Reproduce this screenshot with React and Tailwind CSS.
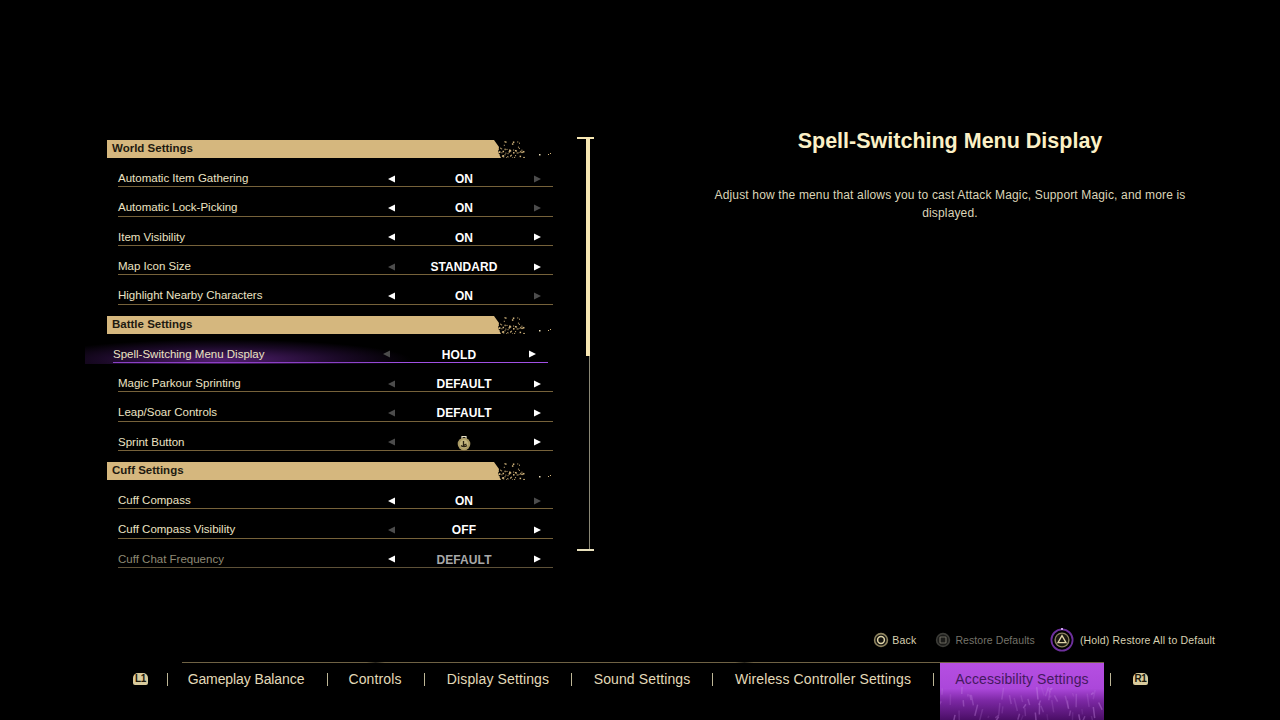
import React from "react";

const FONT = "font-['Liberation_Sans',Arial,sans-serif]";

const sections = [
  {
    title: "World Settings",
    rows: [
      { label: "Automatic Item Gathering", value: "ON", left: true, right: false },
      { label: "Automatic Lock-Picking", value: "ON", left: true, right: false },
      { label: "Item Visibility", value: "ON", left: true, right: true },
      { label: "Map Icon Size", value: "STANDARD", left: false, right: true },
      { label: "Highlight Nearby Characters", value: "ON", left: true, right: false },
    ],
  },
  {
    title: "Battle Settings",
    rows: [
      { label: "Spell-Switching Menu Display", value: "HOLD", left: false, right: true, selected: true },
      { label: "Magic Parkour Sprinting", value: "DEFAULT", left: false, right: true },
      { label: "Leap/Soar Controls", value: "DEFAULT", left: false, right: true },
      { label: "Sprint Button", icon: true, left: false, right: true },
    ],
  },
  {
    title: "Cuff Settings",
    rows: [
      { label: "Cuff Compass", value: "ON", left: true, right: false },
      { label: "Cuff Compass Visibility", value: "OFF", left: false, right: true },
      { label: "Cuff Chat Frequency", value: "DEFAULT", left: true, right: true, faded: true },
    ],
  },
];

// small seeded generator so the paint flecks stay the same on every render
const seeded = (seed) => {
  let s = seed;
  return () => {
    s = (s * 16807) % 2147483647;
    return s / 2147483647;
  };
};

const flecks = (() => {
  const rnd = seeded(4242);
  const out = [];
  for (let i = 0; i < 170; i++) {
    const x = rnd() * 35;
    if (rnd() < x / 38) continue;
    // denser towards the bottom edge of the bar
    const y = 18 - Math.pow(rnd(), 1.4) * 17;
    out.push({ x, y, s: rnd() > 0.6 ? 1.5 : 1 });
  }
  return out;
})();

const streaks = (() => {
  const rnd = seeded(977);
  const out = [];
  for (let i = 0; i < 55; i++) {
    const x = rnd() * 164;
    const y = 22 + rnd() * 32;
    out.push({ x, y, h: 2 + rnd() * 12, d: (rnd() - 0.5) * 7, o: 0.12 + rnd() * 0.3 });
  }
  return out;
})();

const Arrow = ({ dir, on }) => (
  <svg width="7" height="8" viewBox="0 0 7 8" className={on ? "fill-white" : "fill-[#4c4c4c]"}>
    {dir === "left" ? <polygon points="0,4 7,0.5 7,7.5" /> : <polygon points="7,4 0,0.5 0,7.5" />}
  </svg>
);

const Splatter = () => (
  <svg width="63" height="18" viewBox="0 0 63 18" className="shrink-0 fill-[#d5b77e]">
    <polygon points="0,0 4,0 9,7 8,12 11,18 0,18" />
    {flecks.map((f, i) => (
      <rect key={i} x={f.x} y={f.y} width={f.s} height={f.s} />
    ))}
    <rect x="49" y="14" width="1.5" height="1.5" className="fill-[#e8dcb8]" />
    <rect x="58" y="14" width="1" height="1" />
    <rect x="60" y="13" width="1" height="1" />
  </svg>
);

const SprintIcon = () => (
  <svg width="14" height="16" viewBox="0 0 14 16">
    <path d="M5 4V1.5h4V4" fill="none" stroke="#e9e3c6" strokeWidth="1.2" />
    <circle cx="7" cy="9" r="6.3" fill="#a99a63" />
    <circle cx="7" cy="9" r="4.4" fill="#c4b77f" />
    <path d="M4 10.5c1.5 1.5 4.5 1.5 6 0M6.5 6v4.5L9.5 9" fill="none" stroke="#2b2412" strokeWidth="1.3" />
  </svg>
);

const Row = ({ row }) => (
  <div
    className={`relative flex h-[29.33px] w-[435px] items-center border-b pt-[13px] ${
      row.selected ? "ml-[6px] border-[#a050e4]" : "ml-[11px]"
    } ${row.faded ? "border-[#5e5138]" : row.selected ? "" : "border-[#76623a]"}`}
  >
    {row.selected && (
      <div className="absolute -left-[28px] -bottom-[2px] h-[26px] w-[340px] bg-[radial-gradient(ellipse_at_40%_85%,rgba(130,50,180,0.62),rgba(85,30,125,0.3)_42%,transparent_66%)]" />
    )}
    <span
      className={`relative w-[268px] text-[11.5px] leading-none ${
        row.faded ? "text-[#8f8a75]" : "text-[#ece3c3]"
      }`}
    >
      {row.label}
    </span>
    <span className="relative flex w-[10px] justify-center">
      <Arrow dir="left" on={row.left} />
    </span>
    <span
      className={`relative flex h-[14px] w-[136px] items-center justify-center pt-[1px] text-[12px] font-bold leading-none tracking-[0.1px] ${
        row.faded ? "text-[#a9a9a9]" : "text-white"
      }`}
    >
      {row.icon ? <SprintIcon /> : row.value}
    </span>
    <span className="relative flex w-[10px] justify-center">
      <Arrow dir="right" on={row.right} />
    </span>
  </div>
);

const Section = ({ section }) => (
  <section className="mb-[11px]">
    <div className="flex h-[18px]">
      <div className="flex-1 bg-[#d5b77e] pl-[5px] text-[11.5px] font-bold leading-[17px] text-[#1e1a10]">
        {section.title}
      </div>
      <Splatter />
    </div>
    {section.rows.map((row) => (
      <Row key={row.label} row={row} />
    ))}
  </section>
);

const Scrollbar = () => (
  <div className="ml-[24px] flex w-[17px] flex-col pt-[9px]">
    <div className="h-[2px] w-[17px] bg-[#f6e6b2]" />
    <div className="flex h-[410px] w-[17px]">
      <div className="ml-[9px] w-[4px]">
        <div className="h-[217px] w-[4px] bg-[#f6e6b2]" />
        <div className="ml-[3px] h-[193px] w-[1px] bg-[#8a8775]" />
      </div>
    </div>
    <div className="h-[2px] w-[17px] bg-[#e8e0bc]" />
  </div>
);

const CircleHint = () => (
  <svg width="16" height="16" viewBox="0 0 16 16">
    <circle cx="8" cy="8" r="7.2" fill="#8f8560" />
    <circle cx="8" cy="8" r="5.6" fill="#141310" />
    <circle cx="8" cy="8" r="3.4" fill="none" stroke="#e0d5a8" strokeWidth="1.5" />
  </svg>
);

const SquareHint = () => (
  <svg width="16" height="16" viewBox="0 0 16 16">
    <circle cx="8" cy="8" r="7.2" fill="#3c3c38" />
    <circle cx="8" cy="8" r="5.6" fill="#1b1b19" />
    <rect x="5" y="5" width="6" height="6" rx="0.8" fill="none" stroke="#6a685e" strokeWidth="1.2" />
  </svg>
);

const TriangleHint = () => (
  <svg width="24" height="24" viewBox="0 0 24 24">
    <circle cx="12" cy="12" r="10.6" fill="none" stroke="#6d2f9c" strokeWidth="1.8" />
    <rect x="11" y="0" width="2" height="2" fill="#c9a0e8" />
    <circle cx="12" cy="12" r="7.6" fill="#8d8460" />
    <circle cx="12" cy="12" r="6.2" fill="#1a1812" />
    <polygon points="12,7.6 16,14.6 8,14.6" fill="none" stroke="#e0d5a8" strokeWidth="1.3" />
  </svg>
);

const Badge = ({ children, className = "" }) => (
  <span
    className={`flex h-[12px] w-[15px] items-center justify-center rounded-t-[5px] rounded-b-[2px] bg-[#d9cb9c] text-[10px] font-bold leading-none tracking-[-0.3px] text-[#1c180a] ${className}`}
  >
    {children}
  </span>
);

const Sep = ({ className = "" }) => <span className={`h-[13px] w-[1px] shrink-0 bg-[#bdb696] ${className}`} />;

const Tab = ({ children, className }) => (
  <span className={`whitespace-nowrap text-center text-[14px] leading-none text-[#e3dab8] ${className}`}>
    {children}
  </span>
);

const ActiveTab = () => (
  <div className="relative mx-[6px] flex h-[57px] w-[164px] items-start justify-center overflow-hidden bg-[linear-gradient(to_bottom,#b64fe2_0%,#ab47da_45%,#7c28a4_66%,#4a0e66_100%)] pt-[9px]">
    <svg width="164" height="57" viewBox="0 0 164 57" className="absolute left-0 top-0">
      {streaks.map((s, i) => (
        <line
          key={i}
          x1={s.x}
          y1={s.y}
          x2={s.x + s.d}
          y2={s.y + s.h}
          stroke="#c98ae6"
          strokeOpacity={s.o}
          strokeWidth="1.5"
        />
      ))}
    </svg>
    <span className="relative whitespace-nowrap text-[14px] leading-none tracking-[0.12px] text-[#45195f]">
      Accessibility Settings
    </span>
  </div>
);

export default function App() {
  return (
    <div className={`flex h-[720px] w-[1280px] flex-col overflow-hidden bg-black ${FONT}`}>
      <main className="flex flex-1 pl-[107px] pt-[128px]">
        <div className="w-[446px] pt-[12px]">
          {sections.map((section) => (
            <Section key={section.title} section={section} />
          ))}
        </div>
        <Scrollbar />
        <div className="ml-[106px] w-[500px] text-center">
          <h1 className="text-[21.5px] font-bold leading-[26px] text-[#fbf0c6]">
            Spell-Switching Menu Display
          </h1>
          <p className="mx-auto mt-[32px] w-[480px] text-[12px] leading-[18px] tracking-[0.15px] text-[#dcd5b8]">
            Adjust how the menu that allows you to cast Attack Magic, Support Magic, and more is displayed.
          </p>
        </div>
      </main>

      <div className="mb-[10px] flex h-[24px] items-center justify-end pr-[65px] text-[10.5px] leading-none text-[#d8d1b2]">
        <CircleHint />
        <span className="ml-[3px] pt-[1px] tracking-[0.2px]">Back</span>
        <span className="ml-[19px] flex items-center">
          <SquareHint />
        </span>
        <span className="ml-[4px] pt-[1px] tracking-[0.08px] text-[#75736a]">Restore Defaults</span>
        <span className="ml-[15px]">
          <TriangleHint />
        </span>
        <span className="ml-[6px] pt-[1px] tracking-[0.17px]">(Hold) Restore All to Default</span>
      </div>

      <div className="ml-[182px] h-[1px] w-[922px] bg-[linear-gradient(to_right,#6f6244_0%,#6f6244_20%,#27231a_21%,#6f6244_22%,#6f6244_60%,#2b271c_61%,#6f6244_62%,#6f6244_100%)]" />
      <nav className="flex h-[57px] items-start pl-[133px]">
        <div className="flex h-[32px] items-center">
          <Badge>L1</Badge>
          <Sep className="ml-[19px]" />
        </div>
        <div className="flex h-[32px] items-center">
          <Tab className="w-[159px] pr-[3px] tracking-[-0.1px]">Gameplay Balance</Tab>
          <Sep />
          <Tab className="w-[96px] pr-[2px] tracking-[0.12px]">Controls</Tab>
          <Sep />
          <Tab className="w-[146px] tracking-[0.12px]">Display Settings</Tab>
          <Sep />
          <Tab className="w-[140px] tracking-[0.12px]">Sound Settings</Tab>
          <Sep />
          <Tab className="w-[220px] tracking-[0.12px]">Wireless Controller Settings</Tab>
          <Sep />
        </div>
        <ActiveTab />
        <div className="flex h-[32px] items-center">
          <Sep />
          <Badge className="ml-[22px]">R1</Badge>
        </div>
      </nav>
    </div>
  );
}
